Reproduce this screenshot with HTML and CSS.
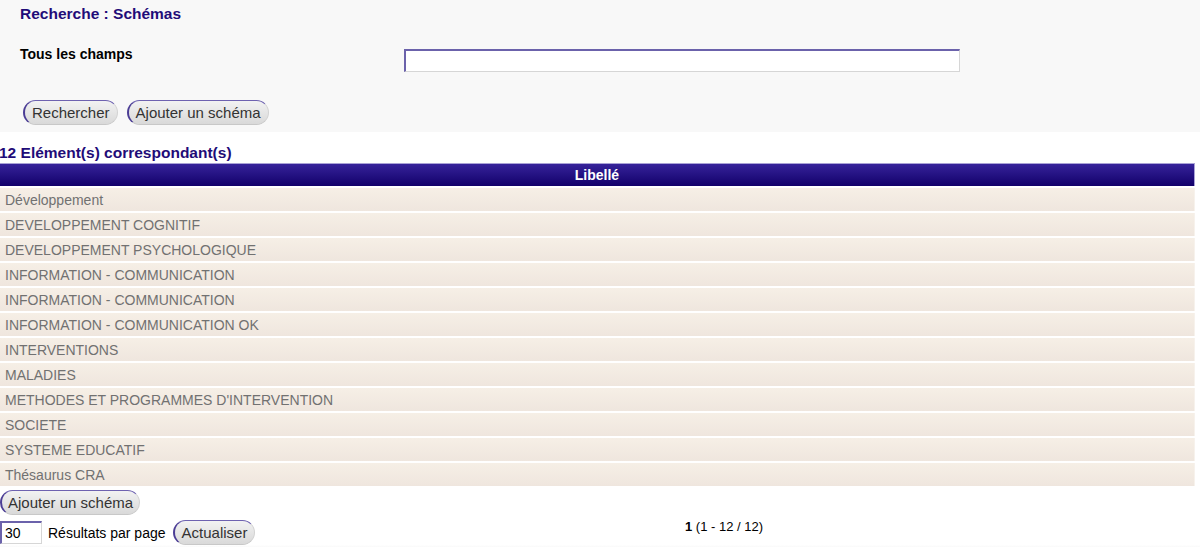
FILE: index.html
```html
<!DOCTYPE html>
<html lang="fr">
<head>
<meta charset="utf-8">
<title>Recherche : Schémas</title>
<link rel="stylesheet" href="styles.css">
</head>
<body>
<div class="search-panel">
  <h1 class="title">Recherche : Schémas</h1>
  <div class="field-row">
    <label class="field-label" for="q">Tous les champs</label>
    <input class="text-input search-input" id="q" type="text">
  </div>
  <div class="button-row">
    <button class="btn">Rechercher</button>
    <button class="btn">Ajouter un schéma</button>
  </div>
</div>
<h2 class="count">12 Elément(s) correspondant(s)</h2>
<table class="results">
  <thead>
    <tr><th>Libellé</th></tr>
  </thead>
  <tbody>
    <tr><td>Développement</td></tr>
    <tr><td>DEVELOPPEMENT COGNITIF</td></tr>
    <tr><td>DEVELOPPEMENT PSYCHOLOGIQUE</td></tr>
    <tr><td>INFORMATION - COMMUNICATION</td></tr>
    <tr><td>INFORMATION - COMMUNICATION</td></tr>
    <tr><td>INFORMATION - COMMUNICATION OK</td></tr>
    <tr><td>INTERVENTIONS</td></tr>
    <tr><td>MALADIES</td></tr>
    <tr><td>METHODES ET PROGRAMMES D'INTERVENTION</td></tr>
    <tr><td>SOCIETE</td></tr>
    <tr><td>SYSTEME EDUCATIF</td></tr>
    <tr><td>Thésaurus CRA</td></tr>
  </tbody>
</table>
<div class="actions">
  <button class="btn">Ajouter un schéma</button>
</div>
<div class="pager">
  <div class="pager-left">
    <input class="text-input per-page" type="text" value="30">
    <span class="per-page-label">Résultats par page</span>
    <button class="btn">Actualiser</button>
  </div>
  <div class="page-info"><b>1</b> (1 - 12 / 12)</div>
</div>
<div class="footer-shade"></div>
</body>
</html>
```
FILE: styles.css
```css
html, body {
  margin: 0;
  padding: 0;
  background: #ffffff;
  font-family: "Liberation Sans", Arial, sans-serif;
  color: #000;
}
.search-panel {
  background: #f8f8f8;
  height: 132px;
  padding: 5px 20px 0 20px;
  box-sizing: border-box;
}
.title {
  margin: 0;
  font-size: 15.5px;
  font-weight: bold;
  color: #1f0c78;
  line-height: 18px;
}
.field-row {
  display: grid;
  grid-template-columns: 384px 556px;
  margin-top: 21px;
  align-items: start;
}
.field-label {
  font-size: 14px;
  font-weight: bold;
  line-height: 18px;
  padding-top: 1px;
}
.text-input {
  box-sizing: border-box;
  background: #fff;
  border-style: solid;
  border-width: 2px 1px 1px 2px;
  border-color: #6b62ab #d6d6d6 #d6d6d6 #6b62ab;
  font-family: "Liberation Sans", Arial, sans-serif;
  outline: none;
  margin: 0;
}
.search-input {
  width: 556px;
  height: 23px;
  margin-top: 5px;
}
.button-row {
  display: flex;
  gap: 9px;
  margin-top: 28px;
  padding-left: 3px;
}
.btn {
  font-family: "Liberation Sans", Arial, sans-serif;
  font-size: 15px;
  color: #333;
  height: 25px;
  padding: 0 7px;
  border-radius: 13px;
  border-style: solid;
  border-width: 1px 1px 1px 2px;
  border-color: #6e62b0 #d2d2d2 #c8c8c8 #4b3d95;
  background: linear-gradient(#f2f2f2, #d9d9d9);
  line-height: 21px;
  cursor: pointer;
  margin: 0;
}
.count {
  margin: 12px 0 0 -1px;
  font-size: 15.5px;
  font-weight: bold;
  color: #1f0c78;
  line-height: 18px;
}
.results {
  width: 1195px;
  border-collapse: separate;
  border-spacing: 0 2px;
  margin-top: -1px;
}
.results th {
  height: 23px;
  padding: 0;
  font-size: 14px;
  font-weight: bold;
  color: #fff;
  background: linear-gradient(#36239a, #12006a);
  border-top: 1px solid #a9a2d6;
  border-right: 1px solid #a9a2d6;
  box-sizing: border-box;
}
.results td {
  height: 23px;
  padding: 0 0 0 5px;
  font-size: 14px;
  color: #717171;
  background: linear-gradient(#f6efe6, #efe6de);
  border-right: 1px solid #f7f2ec;
  box-sizing: border-box;
}
.actions {
  margin-top: 2px;
}
.actions .btn {
  padding: 0 6px;
}
.pager {
  display: grid;
  grid-template-columns: 685px 1fr;
  align-items: center;
  margin-top: 5px;
}
.pager-left {
  display: flex;
  align-items: center;
}
.per-page {
  width: 42px;
  height: 23px;
  font-size: 14px;
  padding: 0 3px;
}
.per-page-label {
  font-size: 14px;
  margin-left: 6px;
  margin-right: 7px;
}
.page-info {
  font-size: 13px;
  margin-top: -12px;
}
.footer-shade {
  height: 8px;
  background: linear-gradient(#ffffff, #e6e6e6);
}
```
